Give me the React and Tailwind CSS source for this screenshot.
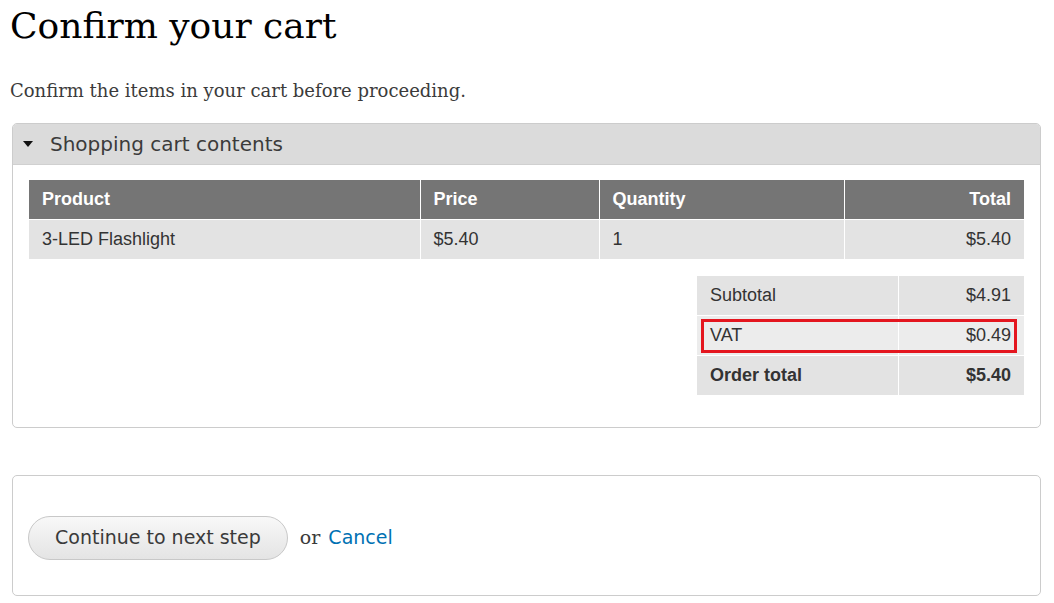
export default function App() {
  const serif = { fontFamily: '"DejaVu Serif", Georgia, serif' };
  return (
    <div className="bg-white min-h-screen pl-[10px] pr-[13px] pt-[2px]">
      <h1 className="text-[36px] leading-[48px] text-black font-['DejaVu_Serif',serif] m-0">Confirm your cart</h1>
      <p className="mt-[28px] text-[18px] leading-[26px] text-[#3b3b3b] font-['DejaVu_Serif',serif]">
        Confirm the items in your cart before proceeding.
      </p>

      <div className="mt-[19px] ml-[2px] border border-[#cccccc] rounded-[5px] overflow-hidden">
        <div className="bg-[#dbdbdb] h-[41px] flex items-center border-b border-[#d0d0d0]">
          <span className="ml-[10px] w-[27px] flex items-center">
            <svg width="10" height="6" viewBox="0 0 10 6"><path d="M0 0 H10 L5 6 Z" fill="#111" /></svg>
          </span>
          <span className="text-[20px] text-[#3b3b3b] font-['DejaVu_Sans',sans-serif]">Shopping cart contents</span>
        </div>

        <div className="px-[16px] pt-[15px] pb-[32px]">
          <table className="w-full border-collapse font-['Liberation_Sans',Arial,sans-serif] text-[18px]">
            <thead>
              <tr className="bg-[#757575] text-white h-[39px]">
                <th className="text-left font-bold px-[13px] w-[391px] border-r border-white">Product</th>
                <th className="text-left font-bold px-[13px] w-[179px] border-r border-white">Price</th>
                <th className="text-left font-bold px-[13px] w-[245px] border-r border-white">Quantity</th>
                <th className="text-right font-bold px-[13px]">Total</th>
              </tr>
            </thead>
            <tbody>
              <tr className="bg-[#e3e3e3] text-[#333] h-[40px] border-t border-white">
                <td className="px-[13px] border-r border-white">3-LED Flashlight</td>
                <td className="px-[13px] border-r border-white">$5.40</td>
                <td className="px-[13px] border-r border-white">1</td>
                <td className="px-[13px] text-right">$5.40</td>
              </tr>
            </tbody>
          </table>

          <div className="flex justify-end mt-[17px]">
            <table className="w-[327px] border-collapse font-['Liberation_Sans',Arial,sans-serif] text-[18px] text-[#333]">
              <tbody>
                <tr className="bg-[#e3e3e3] h-[39px]">
                  <td className="px-[13px] w-[201px] border-r border-white">Subtotal</td>
                  <td className="px-[13px] text-right">$4.91</td>
                </tr>
                <tr className="bg-[#ececec] h-[40px] border-t border-white">
                  <td className="px-[13px] border-r border-white relative">
                    VAT
                    <div className="absolute left-[4px] top-[3px] w-[316px] h-[34px] border-[3px] border-[#e4161f] pointer-events-none" />
                  </td>
                  <td className="px-[13px] text-right">$0.49</td>
                </tr>
                <tr className="bg-[#e3e3e3] h-[40px] border-t border-white font-bold">
                  <td className="px-[13px] border-r border-white">Order total</td>
                  <td className="px-[13px] text-right">$5.40</td>
                </tr>
              </tbody>
            </table>
          </div>
        </div>
      </div>

      <div className="mt-[47px] ml-[2px] border border-[#cccccc] rounded-[5px] h-[121px] flex items-center px-[15px] pt-[4px]">
        <button className="h-[44px] px-[26px] rounded-full border border-[#c8c8c8] bg-gradient-to-b from-[#f8f8f8] to-[#e4e4e4] text-[19px] text-[#3a3a3a] font-['DejaVu_Sans',sans-serif]">
          Continue to next step
        </button>
        <span className="ml-[12px] text-[19px] text-[#3b3b3b]" style={serif}>or</span>
        <a className="ml-[8px] text-[19px] text-[#0071b3] font-['DejaVu_Sans',sans-serif]" href="#">Cancel</a>
      </div>
    </div>
  );
}
